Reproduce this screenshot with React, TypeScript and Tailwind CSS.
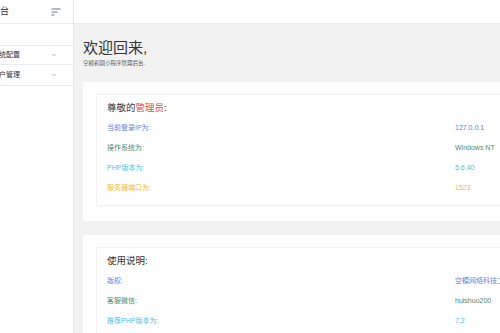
import { ChevronDown } from 'lucide-react'

const FONT = { fontFamily: '"Liberation Sans", "Noto Sans CJK SC", sans-serif' }

const SYS_ROWS = [
  { label: '当前登录IP为:', value: '127.0.0.1', color: 'text-[#5f85dc]' },
  { label: '操作系统为:', value: 'Windows NT', color: 'text-[#4e8a6c]' },
  { label: 'PHP版本为:', value: '5.6.40', color: 'text-[#4cc2e4]' },
  { label: '服务器端口为:', value: '1523', color: 'text-[#f6b73c]' },
]

const INFO_ROWS = [
  { label: '版权:', value: '空模网络科技工作室', color: 'text-[#5f85dc]' },
  { label: '客服微信:', value: 'huishuo200', color: 'text-[#4e8a6c]' },
  { label: '推荐PHP版本为:', value: '7.2', color: 'text-[#4cc2e4]' },
]

function SortIcon() {
  return (
    <svg width="10" height="8" viewBox="0 0 10 8" className="text-gray-500">
      <path d="M0.5 1h9M0.5 4h6M0.5 7h3" stroke="currentColor" strokeWidth="1" fill="none" />
    </svg>
  )
}

function Sidebar() {
  return (
    <aside className="-ml-[66px] w-[140px] shrink-0 border-r border-[#e8e8e8] bg-white">
      <div className="flex h-[24px] items-center justify-between border-b border-[#ececec] pl-[39px] pr-[12px]">
        <span className="text-[9px] text-[#333]">管理后台</span>
        <SortIcon />
      </div>
      <div className="h-[22px] border-b border-[#ececec]" />
      <div className="flex h-[19px] items-center justify-between border-b border-[#ececec] pl-[58px] pr-[16px]">
        <span className="text-[7px] text-[#333]">系统配置</span>
        <ChevronDown size={6} className="text-gray-500" />
      </div>
      <div className="flex h-[21px] items-center justify-between border-b border-[#ececec] pl-[58px] pr-[16px]">
        <span className="text-[7px] text-[#333]">用户管理</span>
        <ChevronDown size={6} className="text-gray-500" />
      </div>
    </aside>
  )
}

function InfoCard({ title, rows, highlight }: { title: string; rows: typeof SYS_ROWS; highlight?: string }) {
  return (
    <div className="bg-white px-[13px] pt-[12px] pb-[15px]">
      <div className="border border-[#f2f2f2] px-[10px] pt-[7px] pb-[12px] shadow-[0_1px_2px_rgba(0,0,0,0.03)]">
        <div className="text-[9.5px] leading-[12px] text-[#333]">
          {title}
          {highlight && <span className="text-[#f5403c]">{highlight}</span>}:
        </div>
        <div className="mt-[8px] flex flex-col gap-[9px]">
          {rows.map((r) => (
            <div key={r.label} className={`grid grid-cols-[348px_1fr] text-[7px] leading-[11px] ${r.color}`}>
              <span>{r.label}</span>
              <span className="whitespace-nowrap">{r.value}</span>
            </div>
          ))}
        </div>
      </div>
    </div>
  )
}

export default function App() {
  return (
    <div className="flex h-[333px] w-[500px] overflow-hidden bg-white" style={FONT}>
      <Sidebar />
      <main className="flex w-[480px] shrink-0 flex-col">
        <header className="h-[24px] shrink-0 border-b border-[#ececec] bg-white" />
        <div className="flex-1 bg-[#f2f2f2] pl-[9px] pt-[15px]">
          <h1 className="text-[15px] leading-[18px] text-[#333]">欢迎回来,</h1>
          <p className="mt-[2px] text-[5.5px] leading-[8px] text-[#555]">空模彩圆小程序管理后台.</p>
          <div className="mt-[15px] flex flex-col gap-[14px]">
            <InfoCard title="尊敬的" highlight="管理员" rows={SYS_ROWS} />
            <InfoCard title="使用说明" rows={INFO_ROWS} />
          </div>
        </div>
      </main>
    </div>
  )
}
